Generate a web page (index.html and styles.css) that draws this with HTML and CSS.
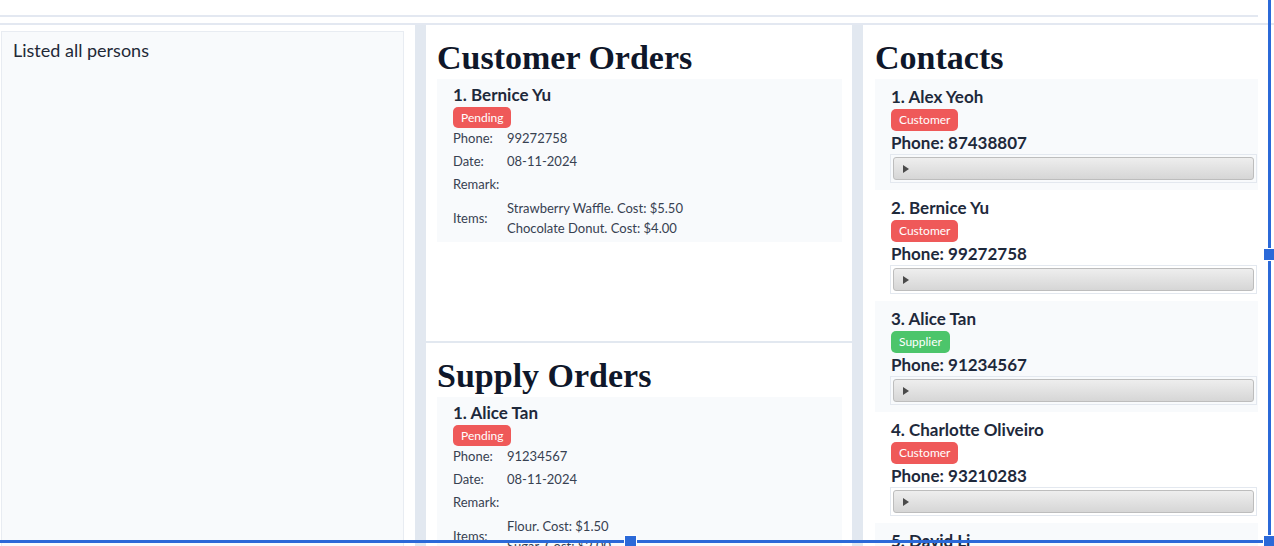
FILE: index.html
```html
<!DOCTYPE html>
<html lang="en">
<head>
<meta charset="utf-8">
<title>Orders</title>
<link rel="stylesheet" href="styles.css">
</head>
<body>
<div class="app">
  <div class="topbar"></div>
  <div class="rule"></div>
  <div class="main">
    <aside class="result"><p>Listed all persons</p></aside>
    <div class="divider"></div>
    <section class="orders">
      <div class="pane pane-top">
        <h1>Customer Orders</h1>
        <div class="order">
          <div class="name">1. Bernice Yu</div>
          <span class="badge red">Pending</span>
          <div class="details">
            <span class="lbl">Phone:</span><span>99272758</span>
            <span class="lbl">Date:</span><span>08-11-2024</span>
            <span class="lbl">Remark:</span><span></span>
            <span class="lbl items-lbl">Items:</span>
            <div class="items"><div>Strawberry Waffle. Cost: $5.50</div><div>Chocolate Donut. Cost: $4.00</div></div>
          </div>
        </div>
      </div>
      <div class="pane pane-bottom">
        <h1>Supply Orders</h1>
        <div class="order">
          <div class="name">1. Alice Tan</div>
          <span class="badge red">Pending</span>
          <div class="details">
            <span class="lbl">Phone:</span><span>91234567</span>
            <span class="lbl">Date:</span><span>08-11-2024</span>
            <span class="lbl">Remark:</span><span></span>
            <span class="lbl items-lbl">Items:</span>
            <div class="items"><div>Flour. Cost: $1.50</div><div>Sugar. Cost: $2.00</div></div>
          </div>
        </div>
      </div>
    </section>
    <div class="divider"></div>
    <section class="contacts">
      <h1>Contacts</h1>
      <div class="contact">
        <div class="name">1. Alex Yeoh</div>
        <span class="badge red">Customer</span>
        <div class="phone">Phone: 87438807</div>
        <div class="accordion"><div class="acc-btn"><span class="tri"></span></div></div>
      </div>
      <div class="contact alt">
        <div class="name">2. Bernice Yu</div>
        <span class="badge red">Customer</span>
        <div class="phone">Phone: 99272758</div>
        <div class="accordion"><div class="acc-btn"><span class="tri"></span></div></div>
      </div>
      <div class="contact">
        <div class="name">3. Alice Tan</div>
        <span class="badge green">Supplier</span>
        <div class="phone">Phone: 91234567</div>
        <div class="accordion"><div class="acc-btn"><span class="tri"></span></div></div>
      </div>
      <div class="contact alt">
        <div class="name">4. Charlotte Oliveiro</div>
        <span class="badge red">Customer</span>
        <div class="phone">Phone: 93210283</div>
        <div class="accordion"><div class="acc-btn"><span class="tri"></span></div></div>
      </div>
      <div class="contact">
        <div class="name">5. David Li</div>
        <span class="badge red">Customer</span>
        <div class="phone">Phone: 91031282</div>
        <div class="accordion"><div class="acc-btn"><span class="tri"></span></div></div>
      </div>
    </section>
  </div>
  <div class="selection">
    <span class="handle h-right"></span>
    <span class="handle h-bottom"></span>
    <span class="handle h-corner"></span>
  </div>
</div>
</body>
</html>
```

FILE: styles.css
```css
* { box-sizing: border-box; }
html, body { margin: 0; padding: 0; background: #ffffff; }
body {
  width: 1274px;
  height: 546px;
  overflow: hidden;
  font-family: Lato, "Noto Sans", sans-serif;
  color: #1e293b;
}
.app {
  position: relative;
  width: 1274px;
  height: 546px;
  overflow: hidden;
}
.topbar {
  height: 17px;
  width: 1258px;
  border-bottom: 2px solid #e3e8f1;
}
.rule {
  margin-top: 6px;
  height: 2px;
  background: #e3e8f1;
}
.main {
  display: flex;
  height: 521px;
}
.result {
  margin: 6px 11px 0 1px;
  width: 403px;
  background: #f8fafc;
  border: 1px solid #e8ecf2;
  border-bottom: none;
}
.result p {
  margin: 0;
  padding: 6px 0 0 11px;
  font-size: 18px;
  line-height: 24px;
  color: #1f2937;
}
.divider {
  width: 11px;
  flex: none;
  background: #e2e8f0;
}
.orders {
  width: 426px;
  flex: none;
  display: flex;
  flex-direction: column;
  overflow: hidden;
}
.pane {
  padding: 13px 10px 0 11px;
}
.pane-top {
  flex: none;
  height: 318px;
  border-bottom: 2px solid #e2e8f0;
}
.pane-bottom { flex: none; }
h1 {
  margin: 0 0 1px 0;
  font-family: "Liberation Serif", serif;
  font-weight: bold;
  font-size: 34px;
  line-height: 40px;
  color: #0f172a;
}
.order {
  background: #f8fafc;
  padding: 5px 16px 4px 16px;
}
.name {
  font-weight: bold;
  font-size: 17px;
  line-height: 22px;
  color: #1e293b;
}
.badge {
  display: block;
  width: max-content;
  color: #ffffff;
  font-size: 12px;
  line-height: 21px;
  padding: 0 8px;
  border-radius: 5px;
}
.order .badge { margin-top: 1px; }
.badge.red { background: #ef5959; }
.badge.green { background: #4cc56b; }
.details {
  display: grid;
  grid-template-columns: 54px auto;
  grid-template-rows: 23px 23px 23px auto;
  align-items: center;
  font-size: 13px;
  color: #374151;
  margin-top: -2px;
}
.details .items {
  line-height: 20px;
  padding-top: 3px;
}
.details .items-lbl { padding-top: 3px; }
.contacts {
  flex: 1;
  padding: 13px 16px 0 12px;
}
.contact {
  height: 111px;
  background: #f8fafc;
  padding: 7px 1px 0 15px;
}
.contact.alt { background: #ffffff; }
.contact .name {
  padding-left: 1px;
  line-height: 22px;
}
.contact .badge {
  margin-left: 1px;
  line-height: 22px;
  margin-top: 1px;
}
.phone {
  padding-left: 1px;
  font-weight: bold;
  font-size: 17px;
  line-height: 23px;
  color: #1e293b;
}
.accordion {
  border: 1px solid #e3e8ef;
  padding: 2px;
}
.acc-btn {
  height: 23px;
  border: 1px solid #bdbdbd;
  border-radius: 3px;
  background: linear-gradient(#eeeeee, #d6d6d6);
  display: flex;
  align-items: center;
  padding-left: 9px;
}
.tri {
  width: 0;
  height: 0;
  border-left: 6px solid #4a4a4a;
  border-top: 4px solid transparent;
  border-bottom: 4px solid transparent;
}
.selection {
  position: absolute;
  left: 0;
  top: -4px;
  width: 1271px;
  height: 547px;
  border-right: 3px solid #2b69d8;
  border-bottom: 3px solid #2b69d8;
  pointer-events: none;
}
.handle {
  position: absolute;
  width: 13px;
  height: 13px;
  background: #2b69d8;
  border: 1px solid #ffffff;
}
.h-right { right: -8px; top: 252px; }
.h-bottom { left: 624px; bottom: -8px; }
.h-corner { right: -8px; bottom: -8px; }
```
